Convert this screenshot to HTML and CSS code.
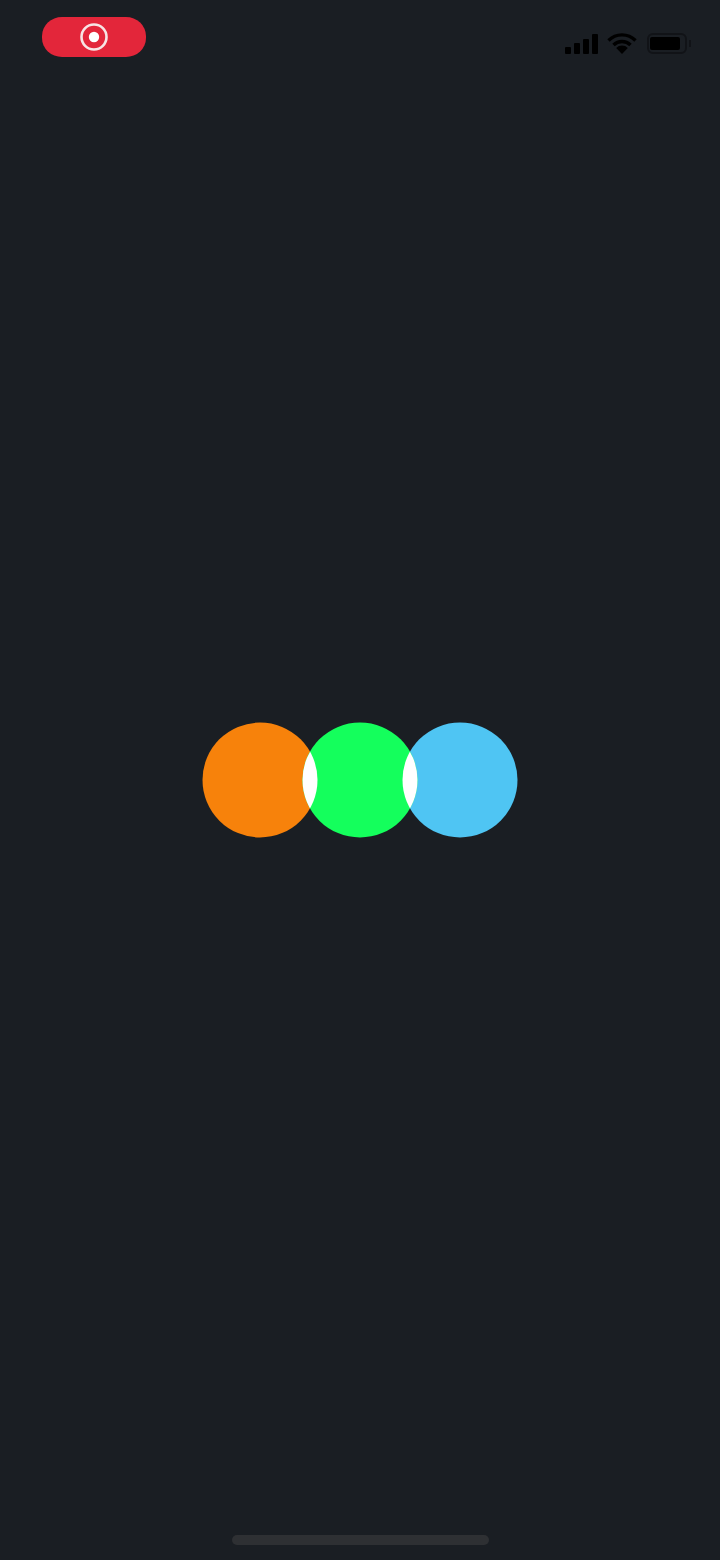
FILE: index.html
```html
<!DOCTYPE html>
<html lang="en">
<head>
    <meta charset="UTF-8">
    <meta name="viewport" content="width=device-width, initial-scale=1.0">
    <title>Loading</title>
    <link rel="stylesheet" href="styles.css">
</head>
<body>
    <div class="pantalla">
        <header class="barra">
            <div class="grabando">
                <svg class="punto" width="28" height="28" viewBox="0 0 28 28">
                    <circle cx="14" cy="14" r="12.5" fill="none" stroke="#f7e4e4" stroke-width="2.6"/>
                    <circle cx="14" cy="14" r="5.2" fill="#fff"/>
                </svg>
            </div>
            <div class="estado">
                <svg width="34" height="20" viewBox="0 0 34 20">
                    <rect x="0" y="13" width="6" height="7" rx="1" fill="#000"/>
                    <rect x="9" y="9" width="6" height="11" rx="1" fill="#000"/>
                    <rect x="18" y="5" width="6" height="15" rx="1" fill="#000"/>
                    <rect x="27" y="0" width="6" height="20" rx="1" fill="#000"/>
                </svg>
                <svg width="30" height="21" viewBox="0 0 30 21">
                    <path d="M1.5 7.5 A19 19 0 0 1 28.5 7.5" fill="none" stroke="#000" stroke-width="3.4"/>
                    <path d="M6.5 12 A12 12 0 0 1 23.5 12" fill="none" stroke="#000" stroke-width="3.4"/>
                    <path d="M15 21 L9.2 15 A8 8 0 0 1 20.8 15 Z" fill="#000"/>
                </svg>
                <div class="bateria">
                    <div class="carga"></div>
                </div>
            </div>
        </header>
        <main class="circulos">
            <svg width="316" height="116" viewBox="0 0 316 116">
                <defs>
                    <clipPath id="corteNaranja"><circle cx="58" cy="58" r="57.5"/></clipPath>
                    <clipPath id="corteAzul"><circle cx="258" cy="58" r="57.5"/></clipPath>
                </defs>
                <circle cx="58" cy="58" r="57.5" fill="#f7820b"/>
                <circle cx="258" cy="58" r="57.5" fill="#4fc5f3"/>
                <circle cx="158" cy="58" r="57.5" fill="#14ff5c"/>
                <circle cx="158" cy="58" r="57.5" fill="#fff" clip-path="url(#corteNaranja)"/>
                <circle cx="158" cy="58" r="57.5" fill="#fff" clip-path="url(#corteAzul)"/>
            </svg>
        </main>
        <footer class="pie">
            <div class="indicador"></div>
        </footer>
    </div>
</body>
</html>
```

FILE: styles.css
```css
*{
    box-sizing: border-box;
}
body{
    margin: 0;
    background-color: #1a1e23;
}
.pantalla{
    height: 1560px;
    display: grid;
    grid-template-rows: 1fr auto 1fr;
}
.barra{
    display: flex;
    justify-content: space-between;
    align-items: flex-start;
    padding: 17px 33px 0 42px;
}
.grabando{
    width: 104px;
    height: 40px;
    border-radius: 20px / 19px;
    background-color: #e3263a;
    display: flex;
    align-items: center;
    justify-content: center;
}
.estado{
    display: flex;
    align-items: center;
    gap: 8px;
    margin-top: 16px;
    filter: blur(0.6px);
}
.bateria{
    position: relative;
    width: 40px;
    height: 21px;
    margin-left: 2px;
    border: 2px solid #111317;
    border-radius: 6px;
    padding: 2px 5px 2px 1px;
}
.bateria::after{
    content: "";
    position: absolute;
    top: 5px;
    right: -6px;
    width: 2px;
    height: 7px;
    background-color: #111317;
}
.carga{
    width: 100%;
    height: 100%;
    background-color: #000;
    border-radius: 2px;
}
.circulos{
    display: flex;
    justify-content: center;
}
.pie{
    display: flex;
    justify-content: center;
    align-items: flex-end;
    padding-bottom: 15px;
}
.indicador{
    width: 257px;
    height: 10px;
    border-radius: 5px;
    background-color: #2e3033;
}
```
